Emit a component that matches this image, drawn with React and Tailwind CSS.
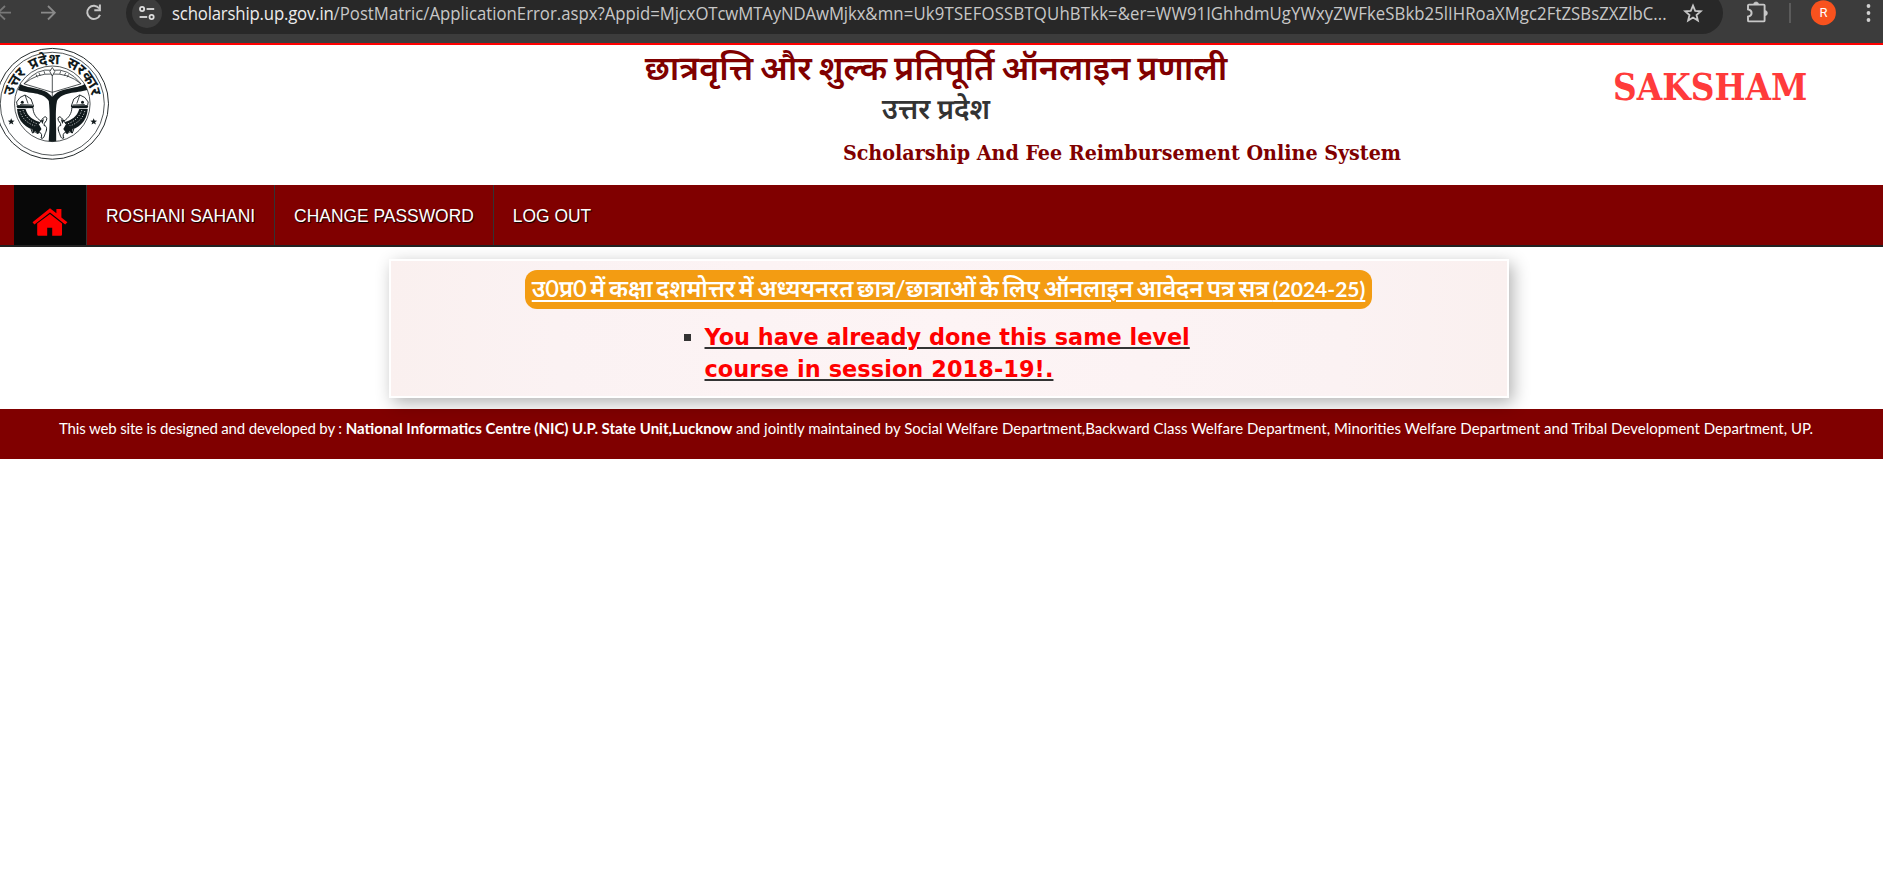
import React from "react";

const hindi = "font-['Lato','Noto_Sans_Devanagari',sans-serif]";

function Fish() {
  return (
    <g>
      <path d="M17.2 105.5 L16.6 102 L20 97.5 L25 95 L31 99 L33.5 106 Z" fill="#fff" stroke="#111a1c" strokeWidth="0.9" />
      <path d="M25 95 L28 103.5 M20 104.5 L32 105" stroke="#111a1c" strokeWidth="0.8" fill="none" />
      <circle cx="22.3" cy="102.3" r="1.5" fill="#111a1c" />
      <path d="M16.5 106 H34 L33 108.3 H17.5 Z" fill="#111a1c" />
      <path d="M17 109 C18 122 26 128 37 131 L42 127 L40 122 C33 120 28 117 25.5 109 Z" fill="#111a1c" />
      <path d="M20 111 C22 119 28 124 38 127 M23 110 C25 117 31 122 39 124.5" stroke="#fff" strokeWidth="0.7" strokeDasharray="1.2 1.5" fill="none" />
      <path d="M27 108.5 C28.5 115 33 119.5 40 121.5 L41 117 L33 108.5 Z" fill="#fff" />
      <path d="M33 108 C33 113 36 118 41 121" stroke="#111a1c" strokeWidth="0.9" fill="none" />
      <path d="M41 121 C43 117.5 46 115 46.8 118.5 C47 122 43.5 122 44 125.5 C48 126 46.5 131 45.2 133.5 C44 137 43.5 139 41 138 C43 134 40 131 37.5 133.5 C35 132 34.5 131 32.5 133 L31 129 L38 125 Z" fill="#fff" stroke="#111a1c" strokeWidth="1" />
      <path d="M32 128 L39 124.5 L41.5 129 L38 134 L35 131 L33 133.5 Z M41 121 L44 119 L42.5 124 Z" fill="#111a1c" />
    </g>
  );
}

function Emblem() {
  return (
    <svg className="block h-[117px] w-[112px]" viewBox="0 45 112 117">
      <defs>
        <path id="arc" d="M12.6 109 A40 40 0 1 1 92 109" />
      </defs>
      <g fill="none" stroke="#252b2d">
        <ellipse cx="52.3" cy="103.8" rx="56.2" ry="55.4" strokeWidth="1" />
        <ellipse cx="52.3" cy="103.8" rx="52" ry="51.5" strokeWidth="0.8" />
        <circle cx="52.3" cy="103.8" r="37.8" strokeWidth="0.8" />
      </g>
      <text className="font-['Noto_Sans_Devanagari',sans-serif] text-[15px] font-bold [word-spacing:2.5px]" textAnchor="middle" fill="#111a1c">
        <textPath href="#arc" startOffset="50%">उत्तर प्रदेश सरकार</textPath>
      </text>
      <g fill="none" stroke="#252b2d" strokeWidth="0.8">
        <path d="M24 83.8 Q37 67.5 52.3 70.3 Q68 67.5 81 83.8 Q68 73 52.3 74 Q37 73 24 83.8 Z" fill="#fff" />
        <path d="M24 83.8 L52.3 92.3 L81 83.8" />
        <path d="M52.3 74 V97" />
        <path d="M36 74.5 l1.5 2.8 M39 73 l1.2 2.6 M44 71.2 l0.8 2.6 M68.6 74.5 l-1.5 2.8 M65.6 73 l-1.2 2.6 M60.6 71.2 l-0.8 2.6" />
        <path d="M52.3 67.5 L54.8 71.5 L52.3 76 L49.8 71.5 Z" fill="#fff" />
      </g>
      <path d="M20.5 84 C29 89.5 44 86.5 52.3 97 C60.5 86.5 76 89.5 84.8 84 C86 86 86.8 88 87.2 90 C76 93.5 62 91.5 57 101 C54.8 112 56.5 122 56.2 141.3 Q52.3 142 48.7 141.3 C50 122 50 112 48.8 101 C43 91.5 29 94 18 90 C18.6 88 19.3 86 20.5 84 Z" fill="#111a1c" />
      <Fish />
      <g transform="translate(104.8 0) scale(-1 1)"><Fish /></g>
      <path d="M11.2 118.3 l.9 2.3 2.5 .1 -2 1.5 .8 2.4 -2.2 -1.4 -2.2 1.4 .8 -2.4 -2 -1.5 2.5 -.1z" fill="#111a1c" />
      <path d="M93.7 118.3 l.9 2.3 2.5 .1 -2 1.5 .8 2.4 -2.2 -1.4 -2.2 1.4 .8 -2.4 -2 -1.5 2.5 -.1z" fill="#111a1c" />
    </svg>
  );
}

function BrowserBar() {
  return (
    <div className="flex h-[43px] items-start overflow-hidden bg-[#3c3c3c]">
      <svg className="h-[43px] w-[126px] shrink-0" viewBox="0 0 126 43" fill="none">
        <path d="M11 12.7 H-1 M5 6 L-2 12.7 L5 19.5" stroke="#777" strokeWidth="1.8" />
        <path d="M41 12.7 H54.5 M48 6 L54.8 12.7 L48 19.5" stroke="#8a8a8a" strokeWidth="1.8" />
        <path d="M99.2 8.5 A6.6 6.6 0 1 0 100 14.8" stroke="#c7c7c7" strokeWidth="2" />
        <path d="M100.9 4.6 V11.2 H94.3 V9.2 H98.9 V4.6 Z" fill="#c7c7c7" />
      </svg>
      <div className="-mt-[8px] flex h-[42px] w-[1597px] shrink-0 items-center rounded-full bg-[#282828] pl-[6px]">
        <div className="flex size-[30px] shrink-0 items-center justify-center rounded-full bg-[#3c3c3c]">
          <svg className="size-[18px]" viewBox="0 0 18 18" fill="none" stroke="#dedede" strokeWidth="1.8">
            <circle cx="4.1" cy="5" r="2.1" /><path d="M8.6 5 H16.2" />
            <circle cx="13.6" cy="13" r="2.1" /><path d="M1.6 13 H9.2" />
          </svg>
        </div>
        <div className="ml-[10px] w-[1506px] shrink-0">
          <div className="origin-left scale-x-[0.957] whitespace-nowrap font-['Open_Sans',sans-serif] text-[17.5px] leading-[24px] text-[#c7c7c7]">
            <span className="tracking-[-0.18px] text-[#ececec]">scholarship.up.gov.in</span>/PostMatric/ApplicationError.aspx?Appid=<span className="tracking-[-0.12px]">MjcxOTcwMTAyNDAwMjkx</span><span className="tracking-[0.17px]">&amp;mn=Uk9TSEFOSSBTQUhBTkk=</span>&amp;er=<span className="tracking-[0.05px]">WW91IGhhdmUgYWxyZWFkeSBkb25lIHRoaXMgc2FtZSBsZXZlbC...</span>
          </div>
        </div>
        <svg className="ml-[5px] size-[20px] shrink-0" viewBox="0 0 20 20" fill="none" stroke="#c7c7c7" strokeWidth="1.8">
          <path d="M10 2.6 L12.2 7.8 L17.8 8.3 L13.5 12 L14.9 17.5 L10 14.6 L5.1 17.5 L6.5 12 L2.2 8.3 L7.8 7.8 Z" />
        </svg>
      </div>
      <svg className="h-[43px] w-[160px] shrink-0" viewBox="1723 0 160 43" fill="none">
        <path d="M1749 4.6 H1763.6 Q1764.6 4.6 1764.6 5.6 V20.4 Q1764.6 21.4 1763.6 21.4 H1749 Q1748 21.4 1748 20.4 V16.6 Q1751.6 16 1751.6 13 Q1751.6 10 1748 9.4 V5.6 Q1748 4.6 1749 4.6 Z" stroke="#c7c7c7" strokeWidth="1.9" />
        <path d="M1753.6 4.4 A2.5 2.5 0 0 1 1758.6 4.4 Z M1764.8 10.5 A2.5 2.5 0 0 1 1764.8 15.7 Z" fill="#c7c7c7" stroke="#c7c7c7" strokeWidth="0.6" />
        <path d="M1790 3 V23" stroke="#666" strokeWidth="1.5" />
        <circle cx="1823.4" cy="12.7" r="12.5" fill="#f8521e" />
        <text x="1823.4" y="17.3" textAnchor="middle" className="font-['Roboto',sans-serif] text-[13px]" fill="#fff">R</text>
        <g fill="#d0d0d0"><circle cx="1868.5" cy="6" r="1.9" /><circle cx="1868.5" cy="13" r="1.9" /><circle cx="1868.5" cy="20" r="1.9" /></g>
      </svg>
    </div>
  );
}

function Header() {
  return (
    <header className="flex h-[142px] items-start border-t-2 border-[#fe0000] bg-white">
      <div className="w-[312px] shrink-0"><Emblem /></div>
      <div className={"flex w-[1248px] shrink-0 flex-col items-center " + hindi}>
        <h1 className="-mt-[2px] whitespace-nowrap text-[34px] font-semibold leading-[48px] text-[#800000] [word-spacing:-1.6px]">
          छात्रवृत्ति और शुल्क प्रतिपूर्ति ऑनलाइन प्रणाली
        </h1>
        <h2 className="whitespace-nowrap text-[28.2px] font-semibold leading-[34px] text-[#333]">उत्तर प्रदेश</h2>
        <p className="ml-[372px] mt-[13px] whitespace-nowrap font-['DejaVu_Serif_Condensed','DejaVu_Serif',serif] text-[21.25px] font-bold leading-[30px] text-[#800000]">
          Scholarship And Fee Reimbursement Online System
        </p>
      </div>
      <div className="ml-[53px] mt-[20px] font-['DejaVu_Serif_Condensed','DejaVu_Serif',serif] text-[36.5px] font-bold leading-[46px] text-[#ff3b3b]">
        SAKSHAM
      </div>
    </header>
  );
}

function NavItem({ children, last }) {
  return (
    <a className={(last ? "" : "border-r border-[#333] ") + "flex items-center px-[19px] pt-[2px] font-['Liberation_Sans',sans-serif] text-[17.43px] leading-[24px] text-white [text-shadow:1px_1px_1px_#000]"}>
      {children}
    </a>
  );
}

function Nav() {
  return (
    <nav className="flex h-[62px] border-b-2 border-[#222] bg-[#800000] pl-[14px]">
      <a className="flex w-[73px] justify-center border-r border-[#333] bg-[#080808] pt-[22px]">
        <svg className="h-[30px] w-[36px]" viewBox="0 0 36 30" fill="#f00">
          <path d="M18 1.2 L24.4 6.2 V2 H29.4 V10.4 L35.4 15.3 L33.2 17.6 L18 5.6 L2.4 17.6 L0.5 15.3 Z" />
          <path d="M18 7 L30 16.4 V27.5 Q30 28.7 28.9 28.7 H20.2 V20.7 H15.2 V28.7 H6.2 Q5.2 28.7 5.2 27.5 V16.6 Z" />
        </svg>
      </a>
      <NavItem>ROSHANI SAHANI</NavItem>
      <NavItem>CHANGE PASSWORD</NavItem>
      <NavItem last>LOG OUT</NavItem>
    </nav>
  );
}

export default function App() {
  return (
    <div className="min-h-[881px] w-[1883px] overflow-hidden bg-white">
      <BrowserBar />
      <Header />
      <Nav />
      <main className="flex h-[162px] justify-center pl-[15px] pt-[12px]">
        <section className="flex h-[139px] w-[1120px] flex-col items-center border-2 border-white bg-[radial-gradient(circle,#fdf4f5_0%,#fbf2f3_70%,#faf0ef_100%)] shadow-[4px_5px_16px_rgba(0,0,0,0.3)]">
          <h3 className={"-ml-px mt-[9px] flex h-[39px] w-[847px] shrink-0 items-center justify-center rounded-[12px] bg-[#f39c12] font-semibold text-white " + hindi}>
            <span className="-mt-[2px] whitespace-nowrap text-[23.6px] leading-[39px] underline decoration-2 underline-offset-[3px] [word-spacing:-2.2px]">
              उ0प्र0 में कक्षा दशमोत्तर में अध्ययनरत छात्र/छात्राओं के लिए ऑनलाइन आवेदन पत्र सत्र <span className="text-[21px] font-bold">(2024-25)</span>
            </span>
          </h3>
          <ul className="mr-[21px] mt-[12px] w-[510px]">
            <li className="flex">
              <span className="mr-[14px] mt-[13px] size-[7px] shrink-0 bg-[#333]" />
              <span className="font-['Verdana','DejaVu_Sans',sans-serif] text-[22.4px] font-bold leading-[32px] text-[#f00] underline decoration-[#333] decoration-2 underline-offset-[2px]">
                You have already done this same level<br /><span className="tracking-[0.08px]">course in session 2018-19!.</span>
              </span>
            </li>
          </ul>
        </section>
      </main>
      <footer className="flex h-[50px] items-start justify-center bg-[#800000] pr-[11px] pt-[7px] font-['Lato',sans-serif] text-[15px] leading-[24px] text-white">
        <p className="whitespace-nowrap">
          <span className="tracking-[-0.16px]">This web site is designed and developed by :</span> <b>National Informatics Centre (NIC) U.P. State Unit,Lucknow</b> and jointly maintained by Social Welfare Department,Backward Class Welfare Department, Minorities Welfare Department and Tribal Development Department, UP.
        </p>
      </footer>
    </div>
  );
}
